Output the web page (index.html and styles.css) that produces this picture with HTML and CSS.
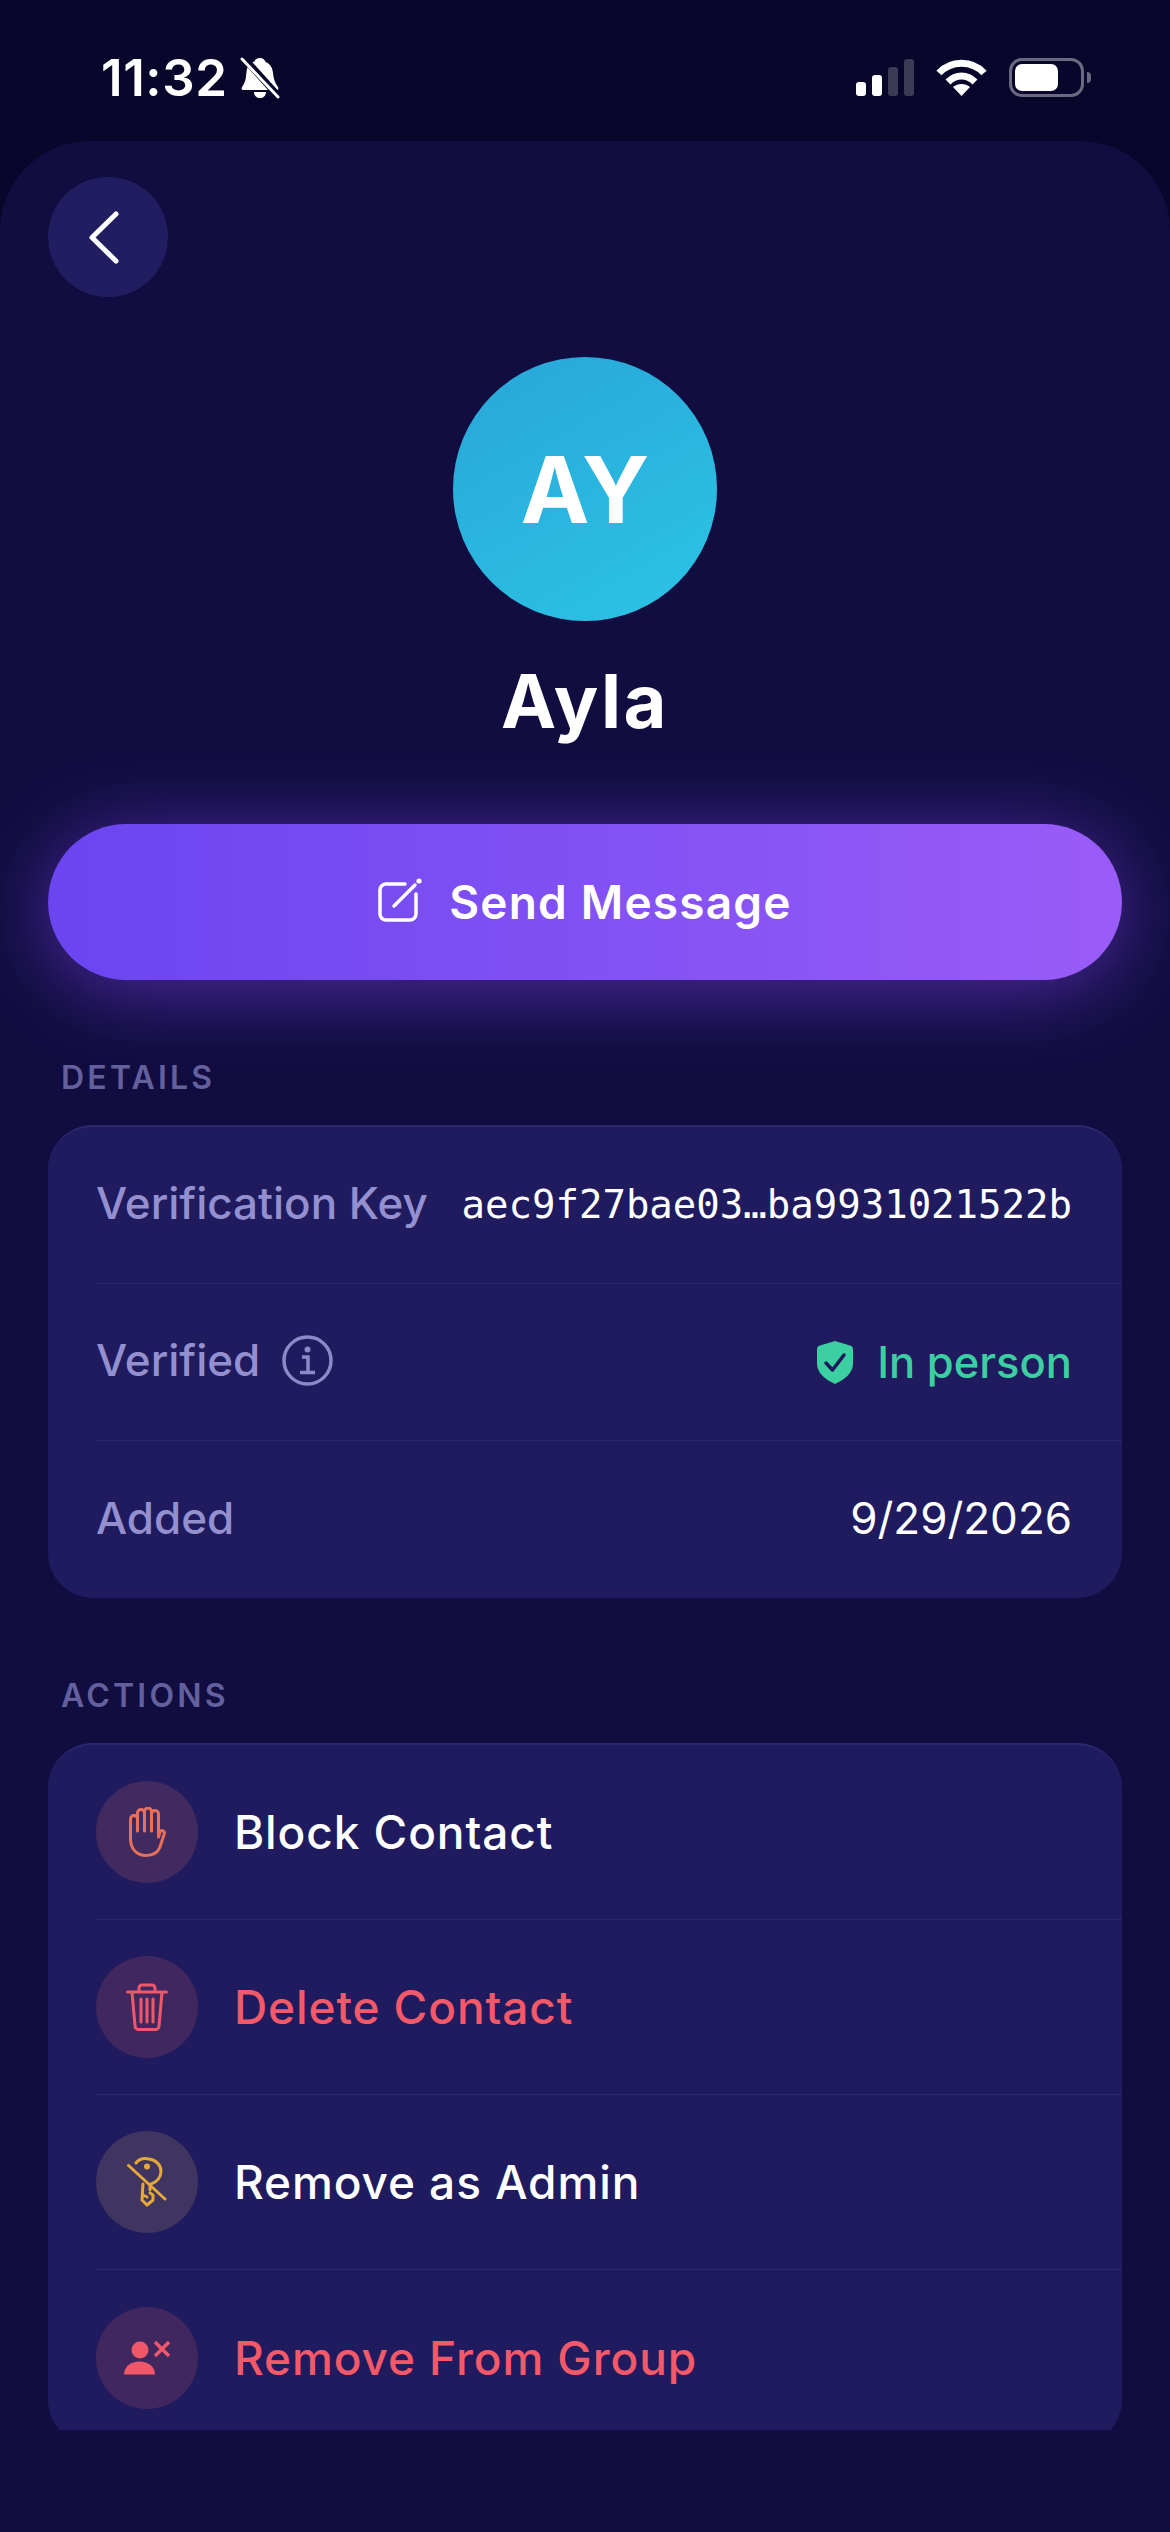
FILE: index.html
```html
<!DOCTYPE html>
<html lang="en">
<head>
<meta charset="utf-8">
<title>Ayla</title>
<link rel="stylesheet" href="styles.css">
</head>
<body>
<div class="screen">
  <header class="status">
    <div class="status-left">
      <span class="time">11:32</span>
      <svg class="bell" width="40" height="42" viewBox="0 0 40 42"><path fill="#fff" d="M20 1c3 0 5 2 5.500 4 5 2 7 6 7.500 11 .5 6 2 10 5 14 1 2 0 3-2 3H4c-2 0-3-1-2-3 2-3 3.500-6 4-10 .4-4 .5-8 2-11 2-3 4-4 6.500-4.500C15 2.500 17 1 20 1z"/><path fill="#fff" d="M14 35h12c0 4-3 6-6 6s-6-2-6-6z"/><path stroke="#08062a" stroke-width="7" d="M2 -1 40 41"/><path stroke="#fff" stroke-width="3" stroke-linecap="round" d="M2 2 38 40"/></svg>
    </div>
    <div class="status-right">
      <div class="signal"><i class="b1"></i><i class="b2"></i><i class="b3"></i><i class="b4"></i></div>
      <svg width="51" height="37" viewBox="0 0 51 37"><g fill="none" stroke="#fff" stroke-width="7"><path d="M3 14C15 1 36 1 48 14"/><path d="M12 23c8-8 19-8 27 0"/></g><path fill="#fff" d="M25.500 37 17 28c5-4 12-4 17 0z"/></svg>
      <div class="battery"><div class="battery-body"><div class="battery-fill"></div></div><div class="battery-nub"></div></div>
    </div>
  </header>

  <main class="sheet">
    <div class="scroller">
      <button class="back" aria-label="Back">
        <svg width="32" height="53" viewBox="0 0 32 53"><path fill="none" stroke="#fff" stroke-width="5" stroke-linecap="round" stroke-linejoin="round" d="M28 3 4 26.500 28 50"/></svg>
      </button>

      <div class="profile">
        <div class="avatar">AY</div>
        <h1 class="name">Ayla</h1>
      </div>

      <button class="send">
        <svg width="44" height="44" viewBox="0 0 44 44"><path fill="none" stroke="#fff" stroke-width="3.500" stroke-linecap="round" d="M27 6H8a6 6 0 0 0-6 6v24a6 6 0 0 0 6 6h24a6 6 0 0 0 6-6V16"/><path fill="none" stroke="#fff" stroke-width="3.500" stroke-linecap="round" d="M16 28 37 7"/><circle cx="41" cy="3" r="2.600" fill="#fff"/></svg>
        <span>Send Message</span>
      </button>

      <h2 class="section-label details-label">DETAILS</h2>
      <section class="card">
        <div class="info-row">
          <span class="info-key">Verification Key</span>
          <span class="mono">aec9f27bae03…ba9931021522b</span>
        </div>
        <div class="info-row">
          <span class="info-key with-icon">Verified
            <svg width="51" height="51" viewBox="0 0 51 51"><circle cx="25.500" cy="25.500" r="23.500" fill="none" stroke="#8d88c8" stroke-width="3.500"/><circle cx="25.500" cy="14.500" r="3" fill="#8d88c8"/><path fill="none" stroke="#8d88c8" stroke-width="3.500" d="M20 22h6v15M18 37.500h15"/></svg>
          </span>
          <span class="verified">
            <svg width="36" height="43" viewBox="0 0 36 43"><path fill="#3ccfa2" d="M18 0 33 4.500c2 .6 3 2 3 4V23c0 9-9 16-18 20C9 39 0 32 0 23V8.500c0-2 1-3.400 3-4z"/><path fill="none" stroke="#1c1a5a" stroke-width="3.500" stroke-linecap="round" stroke-linejoin="round" d="M9 22l6.500 7L27 14"/></svg>
            In person
          </span>
        </div>
        <div class="info-row">
          <span class="info-key">Added</span>
          <span class="date">9/29/2026</span>
        </div>
      </section>

      <h2 class="section-label actions-label">ACTIONS</h2>
      <section class="card">
        <div class="action-row">
          <span class="action-icon tint-orange">
            <svg width="37" height="50" viewBox="0 0 37 50"><path fill="none" stroke="#e8705a" stroke-width="3" stroke-linecap="round" stroke-linejoin="round" d="M1.500 32V12a3.500 3.500 0 0 1 7 0v12M8.500 24V6a3.500 3.500 0 0 1 7 0v18M15.500 24V4.500a3.500 3.500 0 0 1 7 0V24M22.500 24V7a3.500 3.500 0 0 1 7 0v23l1.500-5a2.300 2.300 0 0 1 4.300 1.600L31 40c-2 5-7 8.500-14 8.500-9 0-15.500-6.500-15.500-16.500"/></svg>
          </span>
          <span class="action-text">Block Contact</span>
        </div>
        <div class="action-row">
          <span class="action-icon tint-red">
            <svg width="42" height="49" viewBox="0 0 42 49"><g fill="none" stroke="#f0586a" stroke-width="3" stroke-linecap="round" stroke-linejoin="round"><path d="M1.500 9h39M13 8.500V5a3 3 0 0 1 3-3h10a3 3 0 0 1 3 3v3.500M6 9l3 34a3.500 3.500 0 0 0 3.500 3.500h17A3.500 3.500 0 0 0 33 43l3-34M15 16v23M21 16v23M27 16v23"/></g></svg>
          </span>
          <span class="action-text danger">Delete Contact</span>
        </div>
        <div class="action-row">
          <span class="action-icon tint-amber">
            <svg width="40" height="50" viewBox="0 0 40 50"><g fill="none" stroke="#e5a83b" stroke-width="3" stroke-linecap="round" stroke-linejoin="round"><path d="M1.500 8.500 38 42"/><path d="M9 6c3-4 8-5 13-4 7 1 12 6 12 12 0 6-4 11-10 13-1 .3-1 1-1 2v4"/><path d="M16 27 15 43l5 5 6-5v-5l-3-2"/><path d="M20 40l-4-2"/></g><circle cx="20" cy="9.500" r="3" fill="#e5a83b"/></svg>
          </span>
          <span class="action-text">Remove as Admin</span>
        </div>
        <div class="action-row">
          <span class="action-icon tint-red2">
            <svg width="46" height="34" viewBox="0 0 46 34"><circle cx="16" cy="9" r="8.500" fill="#f0586a"/><path fill="#f0586a" d="M0 33.500c0-8 7-13 15.500-13S31 25.500 31 33.500z"/><path stroke="#f0586a" stroke-width="3.500" d="M31 1 45 15M45 1 31 15"/></svg>
          </span>
          <span class="action-text danger">Remove From Group</span>
        </div>
      </section>
    </div>
  </main>
</div>
</body>
</html>
```

FILE: styles.css
```css
* { box-sizing: border-box; }
html, body { margin: 0; padding: 0; }
body {
  width: 1170px;
  height: 2532px;
  overflow: hidden;
  background: #08062a;
  font-family: "Inter", "Liberation Sans", sans-serif;
  color: #fff;
}
.screen { width: 1170px; height: 2532px; display: flex; flex-direction: column; }

.status {
  height: 141px;
  flex: none;
  display: flex;
  justify-content: space-between;
  padding: 57px 79px 0 101px;
}
.status-left { display: flex; align-items: flex-start; gap: 12px; }
.time { font-size: 51px; font-weight: 600; line-height: 42px; letter-spacing: .6px; }
.status-right { display: flex; align-items: flex-start; gap: 22px; height: 40px; padding-top: 2px; }
.signal { display: flex; align-items: flex-end; gap: 6px; height: 37px; }
.signal i { display: block; width: 10px; border-radius: 3px; background: #fff; }
.signal .b1 { height: 14px; }
.signal .b2 { height: 21px; }
.signal .b3 { height: 29px; background: #3d3a55; }
.signal .b4 { height: 37px; background: #3d3a55; }
.battery { display: flex; align-items: center; gap: 3px; height: 39px; margin-top: -1px; }
.battery-body { width: 75px; height: 39px; border: 3px solid #6b6880; border-radius: 13px; padding: 3px; }
.battery-fill { width: 43px; height: 27px; border-radius: 7px; background: #fff; }
.battery-nub { width: 4px; height: 11px; border-radius: 0 6px 6px 0; background: #6b6880; }

.sheet {
  flex: 1;
  background: #110d40;
  border-radius: 90px 90px 0 0;
}
.scroller {
  height: 2289px;
  overflow: hidden;
  padding: 36px 48px 0;
}
.back {
  display: flex;
  align-items: center;
  justify-content: center;
  width: 120px;
  height: 120px;
  padding: 0 8px 0 0;
  border: 0;
  border-radius: 50%;
  background: #211d60;
}
.profile { display: flex; flex-direction: column; align-items: center; margin-top: 60px; }
.avatar {
  width: 264px;
  height: 264px;
  border-radius: 50%;
  display: flex;
  align-items: center;
  justify-content: center;
  background: linear-gradient(150deg, #28a6d8, #2cc4e6);
  font-size: 92px;
  font-weight: 700;
  color: #fff;
}
.name { margin: 37px 0 0; font-size: 74px; line-height: 86px; font-weight: 700; letter-spacing: 2.5px; }

.send {
  width: 100%;
  height: 156px;
  margin-top: 80px;
  border: 0;
  border-radius: 78px;
  display: flex;
  align-items: center;
  justify-content: center;
  gap: 27px;
  background: linear-gradient(90deg, #6a45f0, #9a5cf8);
  box-shadow: 0 10px 80px rgba(130, 70, 240, .55);
  color: #fff;
  font-family: inherit;
  font-size: 46px;
  font-weight: 600;
  letter-spacing: 1.2px;
}
.send svg { margin-top: -4px; }

.section-label {
  margin: 0;
  font-size: 32px;
  line-height: 38px;
  font-weight: 600;
  letter-spacing: 3.2px;
  color: #64609e;
  padding-left: 13px;
}
.details-label { margin-top: 79px; margin-bottom: 28px; }
.actions-label { margin-top: 79px; margin-bottom: 28px; }

.card {
  background: #1f1b5e;
  border-top: 2px solid #2c2870;
  border-radius: 45px;
  overflow: hidden;
}
.info-row {
  margin-left: 48px;
  padding-right: 50px;
  height: 157px;
  display: flex;
  align-items: center;
  justify-content: space-between;
  border-bottom: 1px solid #2c2870;
}
.info-row:last-child { border-bottom: 0; }
.info-key { font-size: 44px; font-weight: 500; color: #9490d0; padding-bottom: 4px; }
.with-icon { display: flex; align-items: center; gap: 22px; }
.mono { font-family: "DejaVu Sans Mono", "Liberation Mono", monospace; font-size: 39px; color: #fff; padding-bottom: 2px; }
.verified { display: flex; align-items: center; gap: 24px; font-size: 43.5px; font-weight: 500; color: #3ccfa2; }
.date { font-size: 44px; color: #fff; padding-bottom: 3px; }

.action-row {
  margin-left: 48px;
  height: 175px;
  display: flex;
  align-items: center;
  gap: 36px;
  border-bottom: 1px solid #2c2870;
}
.action-row:last-child { border-bottom: 0; }
.action-icon {
  width: 102px;
  height: 102px;
  flex: none;
  border-radius: 50%;
  display: flex;
  align-items: center;
  justify-content: center;
}
.tint-orange { background: #412a60; }
.tint-red { background: #40275f; }
.tint-amber { background: #3f3560; }
.tint-red2 { background: #40275f; }
.action-text { font-size: 46px; font-weight: 500; letter-spacing: .9px; color: #fff; }
.action-text.danger { color: #f4596a; }
```
